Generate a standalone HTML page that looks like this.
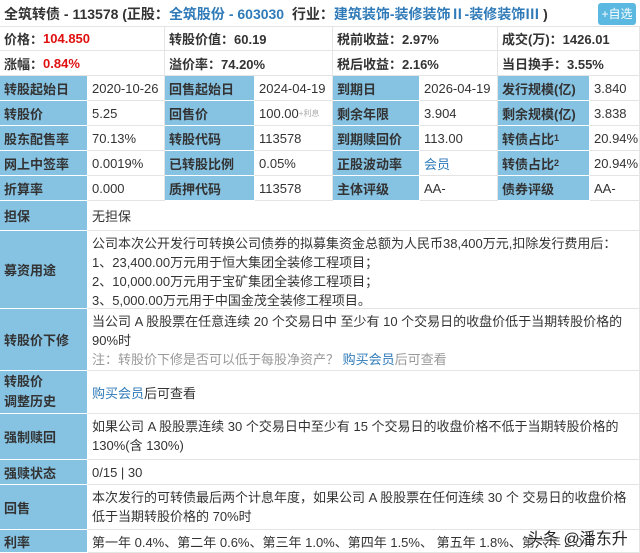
<!DOCTYPE html>
<html><head><meta charset="utf-8"><style>
*{margin:0;padding:0;box-sizing:border-box}
body{width:640px;height:553px;overflow:hidden;background:#fff;font-family:"Liberation Sans","Noto Sans CJK SC",sans-serif;font-size:13px;color:#333;position:relative}
.c{position:absolute;border-right:1px solid #e4e4e4;border-bottom:1px solid #e4e4e4;padding-left:4px;display:flex;align-items:center;white-space:nowrap;overflow:hidden}
.l{background:#86c3e3;font-weight:bold;color:#333;border-color:#fff;border-right:1px solid #fff;border-bottom:1px solid #fff}
.blue{color:#2f7ab8}
.red{color:#e01010;font-weight:bold}
.m{display:block;padding-top:3px;line-height:19px;white-space:normal}
b{font-weight:bold}
</style></head><body>
<div style="position:absolute;left:4px;top:4px;font-size:14px;"><b>全筑转债 - 113578 (正股：</b><span class="blue"><b>全筑股份 - 603030</b></span><b>&nbsp;&nbsp;行业：</b><span class="blue"><b>建筑装饰-装修装饰Ⅱ-装修装饰Ⅲ</b></span><b> )</b></div>
<div style="position:absolute;left:598px;top:3px;width:38px;height:22px;background:#5bb8e0;color:#fff;border-radius:3px;font-size:12px;text-align:center;line-height:22px">+自选</div>

<div class="c" style="left:0;top:26px;width:165px;height:25px;border-top:1px solid #e4e4e4"><b>价格：</b><span class="red">104.850</span></div>
<div class="c" style="left:165px;top:26px;width:168px;height:25px;border-top:1px solid #e4e4e4"><b>转股价值：60.19</b></div>
<div class="c" style="left:333px;top:26px;width:165px;height:25px;border-top:1px solid #e4e4e4"><b>税前收益：2.97%</b></div>
<div class="c" style="left:498px;top:26px;width:142px;height:25px;border-top:1px solid #e4e4e4"><b>成交(万)：1426.01</b></div>
<div class="c" style="left:0;top:51px;width:165px;height:25px"><b>涨幅：</b><span class="red">0.84%</span></div>
<div class="c" style="left:165px;top:51px;width:168px;height:25px"><b>溢价率：74.20%</b></div>
<div class="c" style="left:333px;top:51px;width:165px;height:25px"><b>税后收益：2.16%</b></div>
<div class="c" style="left:498px;top:51px;width:142px;height:25px"><b>当日换手：3.55%</b></div>

<div class="c l" style="left:0;top:76px;width:88px;height:25px">转股起始日</div>
<div class="c" style="left:88px;top:76px;width:77px;height:25px">2020-10-26</div>
<div class="c l" style="left:165px;top:76px;width:90px;height:25px">回售起始日</div>
<div class="c" style="left:255px;top:76px;width:78px;height:25px">2024-04-19</div>
<div class="c l" style="left:333px;top:76px;width:87px;height:25px">到期日</div>
<div class="c" style="left:420px;top:76px;width:78px;height:25px">2026-04-19</div>
<div class="c l" style="left:498px;top:76px;width:92px;height:25px">发行规模(亿)</div>
<div class="c" style="left:590px;top:76px;width:50px;height:25px">3.840</div>

<div class="c l" style="left:0;top:101px;width:88px;height:25px">转股价</div>
<div class="c" style="left:88px;top:101px;width:77px;height:25px">5.25</div>
<div class="c l" style="left:165px;top:101px;width:90px;height:25px">回售价</div>
<div class="c" style="left:255px;top:101px;width:78px;height:25px">100.00<span style="font-size:8px;color:#aaa">+利息</span></div>
<div class="c l" style="left:333px;top:101px;width:87px;height:25px">剩余年限</div>
<div class="c" style="left:420px;top:101px;width:78px;height:25px">3.904</div>
<div class="c l" style="left:498px;top:101px;width:92px;height:25px">剩余规模(亿)</div>
<div class="c" style="left:590px;top:101px;width:50px;height:25px">3.838</div>

<div class="c l" style="left:0;top:126px;width:88px;height:25px">股东配售率</div>
<div class="c" style="left:88px;top:126px;width:77px;height:25px">70.13%</div>
<div class="c l" style="left:165px;top:126px;width:90px;height:25px">转股代码</div>
<div class="c" style="left:255px;top:126px;width:78px;height:25px">113578</div>
<div class="c l" style="left:333px;top:126px;width:87px;height:25px">到期赎回价</div>
<div class="c" style="left:420px;top:126px;width:78px;height:25px">113.00</div>
<div class="c l" style="left:498px;top:126px;width:92px;height:25px">转债占比<sup style="font-size:9px">1</sup></div>
<div class="c" style="left:590px;top:126px;width:50px;height:25px">20.94%</div>

<div class="c l" style="left:0;top:151px;width:88px;height:25px">网上中签率</div>
<div class="c" style="left:88px;top:151px;width:77px;height:25px">0.0019%</div>
<div class="c l" style="left:165px;top:151px;width:90px;height:25px">已转股比例</div>
<div class="c" style="left:255px;top:151px;width:78px;height:25px">0.05%</div>
<div class="c l" style="left:333px;top:151px;width:87px;height:25px">正股波动率</div>
<div class="c blue" style="left:420px;top:151px;width:78px;height:25px">会员</div>
<div class="c l" style="left:498px;top:151px;width:92px;height:25px">转债占比<sup style="font-size:9px">2</sup></div>
<div class="c" style="left:590px;top:151px;width:50px;height:25px">20.94%</div>

<div class="c l" style="left:0;top:176px;width:88px;height:25px">折算率</div>
<div class="c" style="left:88px;top:176px;width:77px;height:25px">0.000</div>
<div class="c l" style="left:165px;top:176px;width:90px;height:25px">质押代码</div>
<div class="c" style="left:255px;top:176px;width:78px;height:25px">113578</div>
<div class="c l" style="left:333px;top:176px;width:87px;height:25px">主体评级</div>
<div class="c" style="left:420px;top:176px;width:78px;height:25px">AA-</div>
<div class="c l" style="left:498px;top:176px;width:92px;height:25px">债券评级</div>
<div class="c" style="left:590px;top:176px;width:50px;height:25px">AA-</div>

<div class="c l" style="left:0;top:201px;width:88px;height:30px">担保</div>
<div class="c" style="left:88px;top:201px;width:552px;height:30px">无担保</div>

<div class="c l" style="left:0;top:231px;width:88px;height:78px">募资用途</div>
<div class="c m" style="left:88px;top:231px;width:552px;height:78px">公司本次公开发行可转换公司债券的拟募集资金总额为人民币38,400万元,扣除发行费用后：<br>1、23,400.00万元用于恒大集团全装修工程项目；<br>2、10,000.00万元用于宝矿集团全装修工程项目；<br>3、5,000.00万元用于中国金茂全装修工程项目。</div>

<div class="c l" style="left:0;top:309px;width:88px;height:62px">转股价下修</div>
<div class="c m" style="left:88px;top:309px;width:552px;height:62px;padding-right:4px">当公司 A 股股票在任意连续 20 个交易日中 至少有 10 个交易日的收盘价低于当期转股价格的 90%时<br><span style="color:#999">注：转股价下修是否可以低于每股净资产？ </span><span class="blue">购买会员</span><span style="color:#999">后可查看</span></div>

<div class="c l" style="left:0;top:371px;width:88px;height:43px;line-height:20px;white-space:normal">转股价<br>调整历史</div>
<div class="c" style="left:88px;top:371px;width:552px;height:43px"><span class="blue">购买会员</span>后可查看</div>

<div class="c l" style="left:0;top:414px;width:88px;height:46px">强制赎回</div>
<div class="c m" style="left:88px;top:414px;width:552px;height:46px;padding-right:4px">如果公司 A 股股票连续 30 个交易日中至少有 15 个交易日的收盘价格不低于当期转股价格的 130%(含 130%)</div>

<div class="c l" style="left:0;top:460px;width:88px;height:25px">强赎状态</div>
<div class="c" style="left:88px;top:460px;width:552px;height:25px">0/15 | 30</div>

<div class="c l" style="left:0;top:485px;width:88px;height:45px">回售</div>
<div class="c m" style="left:88px;top:485px;width:552px;height:45px;padding-right:4px">本次发行的可转债最后两个计息年度，如果公司 A 股股票在任何连续 30 个 交易日的收盘价格低于当期转股价格的 70%时</div>

<div class="c l" style="left:0;top:530px;width:88px;height:23px">利率</div>
<div class="c" style="left:88px;top:530px;width:552px;height:23px">第一年 0.4%、第二年 0.6%、第三年 1.0%、第四年 1.5%、 第五年 1.8%、第六年 2.0%</div>
<div style="position:absolute;left:527px;top:525px;font-size:16px;color:#222;text-shadow:0 0 2px #fff,0 0 2px #fff,0 0 1px #fff">头条 @潘东升</div>
</body></html>
